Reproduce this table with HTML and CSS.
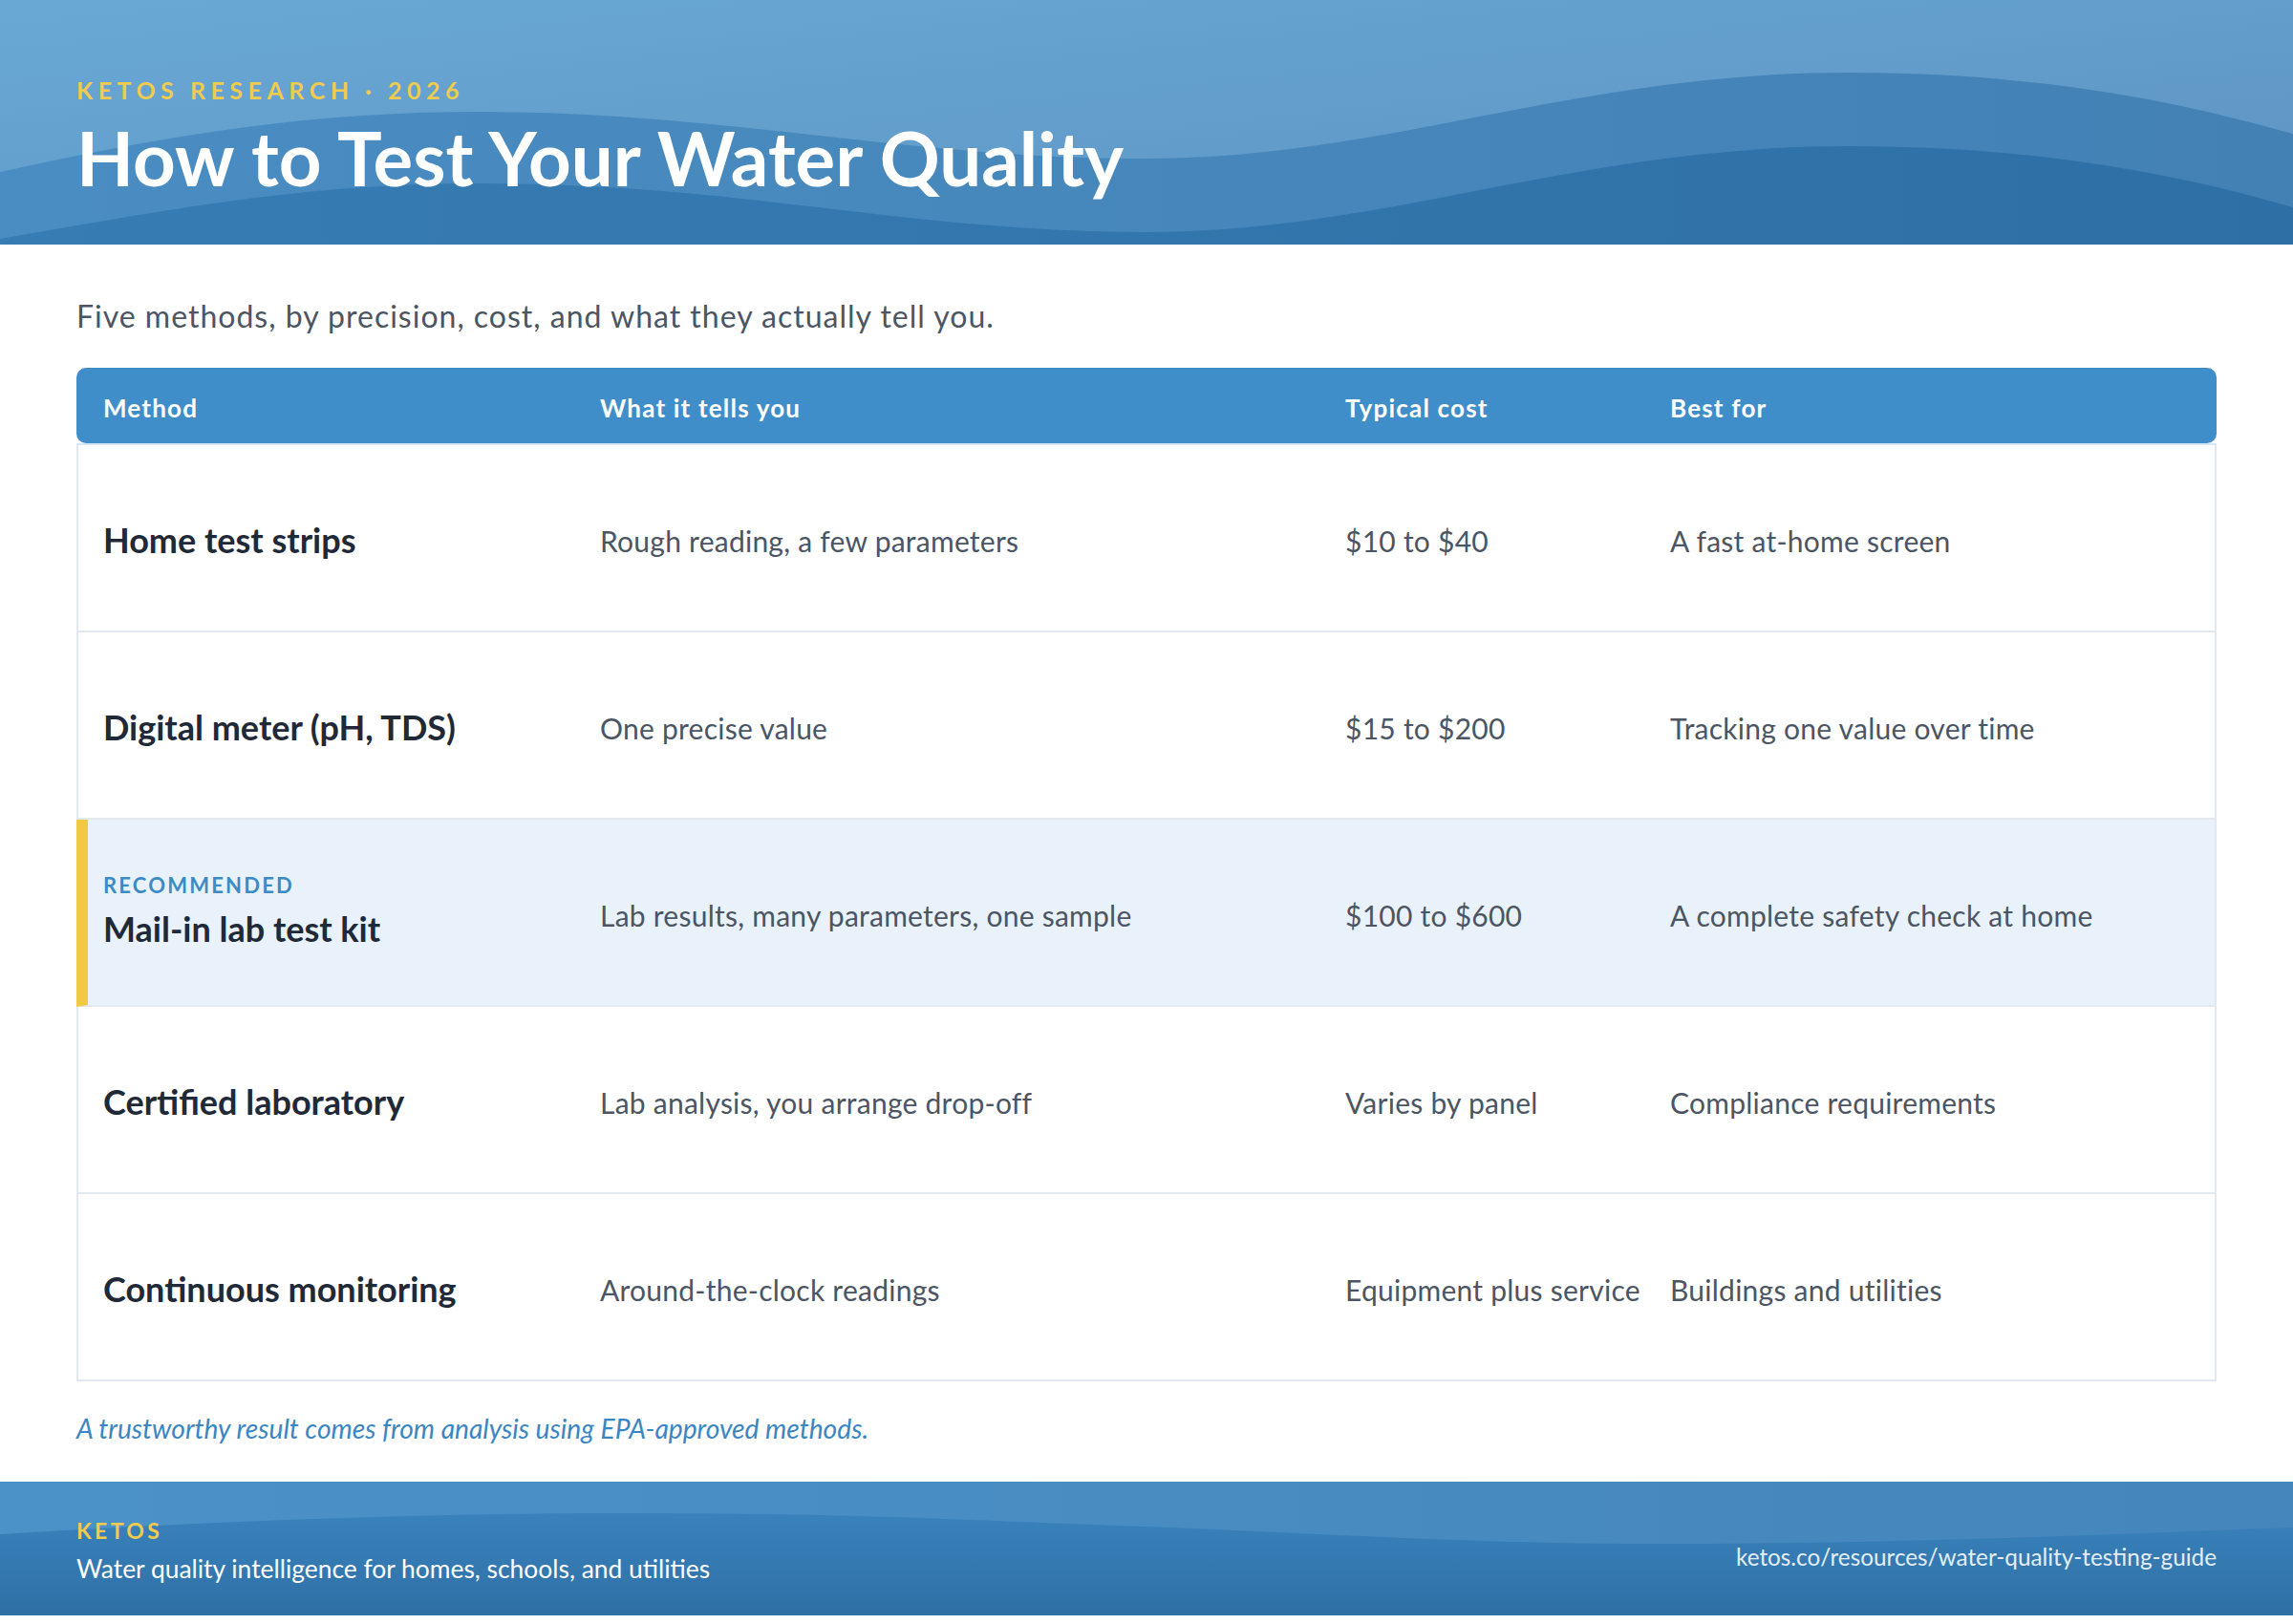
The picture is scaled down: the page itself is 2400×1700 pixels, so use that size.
FILE: index.html
```html
<!DOCTYPE html>
<html lang="en">
<head>
<meta charset="utf-8">
<title>How to Test Your Water Quality</title>
<link rel="stylesheet" href="styles.css">
</head>
<body>
<header class="hero">
  <svg class="hero-waves" viewBox="0 0 2400 256" preserveAspectRatio="none" aria-hidden="true">
    <defs>
      <linearGradient id="hbase" x1="0" y1="0" x2="1" y2="1">
        <stop offset="0" stop-color="#69a8d5"/>
        <stop offset="1" stop-color="#5c93c2"/>
      </linearGradient>
      <linearGradient id="hmid" x1="0" y1="0" x2="1" y2="0">
        <stop offset="0" stop-color="#4a8dc2"/>
        <stop offset="1" stop-color="#4381b5"/>
      </linearGradient>
      <linearGradient id="hdark" x1="0" y1="0" x2="1" y2="0">
        <stop offset="0" stop-color="#377cb3"/>
        <stop offset="1" stop-color="#2e70a6"/>
      </linearGradient>
    </defs>
    <rect x="0" y="0" width="2400" height="256" fill="url(#hbase)"/>
    <path d="M0 180 C180 140 330 117 500 117 C760 117 950 166 1200 166 C1450 166 1650 76 1935 76 C2150 76 2300 112 2400 140 L2400 256 L0 256 Z" fill="url(#hmid)"/>
    <path d="M0 250 C200 215 330 192 500 192 C780 192 950 243 1200 243 C1450 243 1650 153 1935 153 C2150 153 2300 188 2400 217 L2400 256 L0 256 Z" fill="url(#hdark)"/>
  </svg>
  <div class="hero-content">
    <p class="eyebrow">KETOS RESEARCH · 2026</p>
    <h1 class="title">How to Test Your Water Quality</h1>
  </div>
</header>

<main class="content">
  <p class="lede">Five methods, by precision, cost, and what they actually tell you.</p>

  <section class="compare" aria-label="Water testing methods">
    <div class="thead">
      <div class="th">Method</div>
      <div class="th">What it tells you</div>
      <div class="th">Typical cost</div>
      <div class="th">Best for</div>
    </div>
    <div class="tbody">
      <div class="row">
        <div class="cell method"><span class="name">Home test strips</span></div>
        <div class="cell">Rough reading, a few parameters</div>
        <div class="cell">$10 to $40</div>
        <div class="cell">A fast at-home screen</div>
      </div>
      <div class="row">
        <div class="cell method"><span class="name">Digital meter (pH, TDS)</span></div>
        <div class="cell">One precise value</div>
        <div class="cell">$15 to $200</div>
        <div class="cell">Tracking one value over time</div>
      </div>
      <div class="row featured">
        <div class="cell method">
          <span class="tag">RECOMMENDED</span>
          <span class="name">Mail-in lab test kit</span>
        </div>
        <div class="cell">Lab results, many parameters, one sample</div>
        <div class="cell">$100 to $600</div>
        <div class="cell">A complete safety check at home</div>
      </div>
      <div class="row">
        <div class="cell method"><span class="name">Certified laboratory</span></div>
        <div class="cell">Lab analysis, you arrange drop-off</div>
        <div class="cell">Varies by panel</div>
        <div class="cell">Compliance requirements</div>
      </div>
      <div class="row">
        <div class="cell method"><span class="name">Continuous monitoring</span></div>
        <div class="cell">Around-the-clock readings</div>
        <div class="cell">Equipment plus service</div>
        <div class="cell">Buildings and utilities</div>
      </div>
    </div>
  </section>

  <p class="note">A trustworthy result comes from analysis using EPA-approved methods.</p>
</main>

<footer class="site-footer">
  <svg class="footer-waves" viewBox="0 0 2400 140" preserveAspectRatio="none" aria-hidden="true">
    <defs>
      <linearGradient id="fbase" x1="0" y1="0" x2="1" y2="0">
        <stop offset="0" stop-color="#4b92c8"/>
        <stop offset="1" stop-color="#4586bc"/>
      </linearGradient>
      <linearGradient id="fdark" x1="0" y1="0" x2="0" y2="1">
        <stop offset="0" stop-color="#3a82bb"/>
        <stop offset="1" stop-color="#2e70a6"/>
      </linearGradient>
    </defs>
    <rect x="0" y="0" width="2400" height="140" fill="url(#fbase)"/>
    <path d="M0 55 C250 40 450 33 650 33 C900 33 1000 40 1200 47 C1400 55 1550 65 1735 65 C2000 65 2200 55 2400 48 L2400 140 L0 140 Z" fill="url(#fdark)"/>
  </svg>
  <div class="footer-brand">
    <p class="brand">KETOS</p>
    <p class="tagline">Water quality intelligence for homes, schools, and utilities</p>
  </div>
  <p class="url">ketos.co/resources/water-quality-testing-guide</p>
</footer>
</body>
</html>
```

FILE: styles.css
```css
* {
  box-sizing: border-box;
}

html, body {
  margin: 0;
  padding: 0;
  background: #ffffff;
}

body {
  font-family: "Lato", "Noto Sans", "Liberation Sans", sans-serif;
  color: #4b5563;
  width: 2400px;
}

p, h1 {
  margin: 0;
}

/* ---------- Header ---------- */
.hero {
  position: relative;
  height: 256px;
  overflow: hidden;
}

.hero-waves {
  position: absolute;
  inset: 0;
  width: 100%;
  height: 100%;
  display: block;
}

.hero-content {
  position: relative;
  padding: 82px 80px 0;
}

.eyebrow {
  font-size: 25px;
  line-height: 25px;
  font-weight: 700;
  letter-spacing: 0.22em;
  color: #f0cb4d;
}

.title {
  margin-top: 16px;
  font-size: 78px;
  line-height: 1.1;
  font-weight: 700;
  color: #ffffff;
}

/* ---------- Content ---------- */
.content {
  padding: 54px 80px 0;
}

.lede {
  font-size: 32px;
  line-height: 1.3;
  letter-spacing: 1px;
  color: #4b5563;
}

.compare {
  margin-top: 33px;
}

.thead {
  display: grid;
  grid-template-columns: 520px 780px 340px 1fr;
  align-items: center;
  height: 79px;
  padding: 6px 28px 0;
  background: #408ec9;
  border-radius: 10px;
}

.th {
  font-size: 26px;
  font-weight: 700;
  letter-spacing: 1.2px;
  color: #ffffff;
}

.tbody {
  border-top: 2px solid #d5e6f4;
}

.row {
  display: grid;
  grid-template-columns: 520px 780px 340px 1fr;
  align-items: center;
  height: 196px;
  padding: 6px 26px 0;
  border-left: 2px solid #e2e8f0;
  border-right: 2px solid #e2e8f0;
  border-bottom: 2px solid #e3e8ef;
}

.row.featured {
  background: #e9f2fa;
  border-left: 12px solid #f1c944;
  padding-left: 16px;
}

.row.featured .method {
  margin-bottom: 7px;
}

.cell {
  font-size: 30px;
  line-height: 1.2;
  letter-spacing: 0.25px;
  color: #4b5563;
}

.method {
  display: flex;
  flex-direction: column;
}

.name {
  font-size: 36px;
  font-weight: 700;
  letter-spacing: 0;
  color: #1f2937;
}

.tag {
  font-size: 22px;
  font-weight: 700;
  letter-spacing: 0.1em;
  color: #3b8bc6;
  margin-bottom: 11px;
}

.note {
  margin-top: 31px;
  margin-bottom: 38px;
  font-size: 28.2px;
  line-height: 1.3;
  font-style: italic;
  color: #3a86c2;
}

/* ---------- Footer ---------- */
.site-footer {
  position: relative;
  height: 140px;
  padding: 5px 80px 0;
  display: flex;
  justify-content: space-between;
  align-items: center;
  overflow: hidden;
}

.footer-waves {
  position: absolute;
  inset: 0;
  width: 100%;
  height: 100%;
  display: block;
}

.footer-brand,
.url {
  position: relative;
}

.brand {
  font-size: 23px;
  line-height: 1.2;
  font-weight: 700;
  letter-spacing: 0.145em;
  color: #f0cb4d;
}

.tagline {
  margin-top: 10px;
  font-size: 26.4px;
  line-height: 1.2;
  color: #ffffff;
}

.url {
  margin-top: 12px;
  font-size: 24.3px;
  line-height: 1.2;
  color: #e3edf6;
}
```
